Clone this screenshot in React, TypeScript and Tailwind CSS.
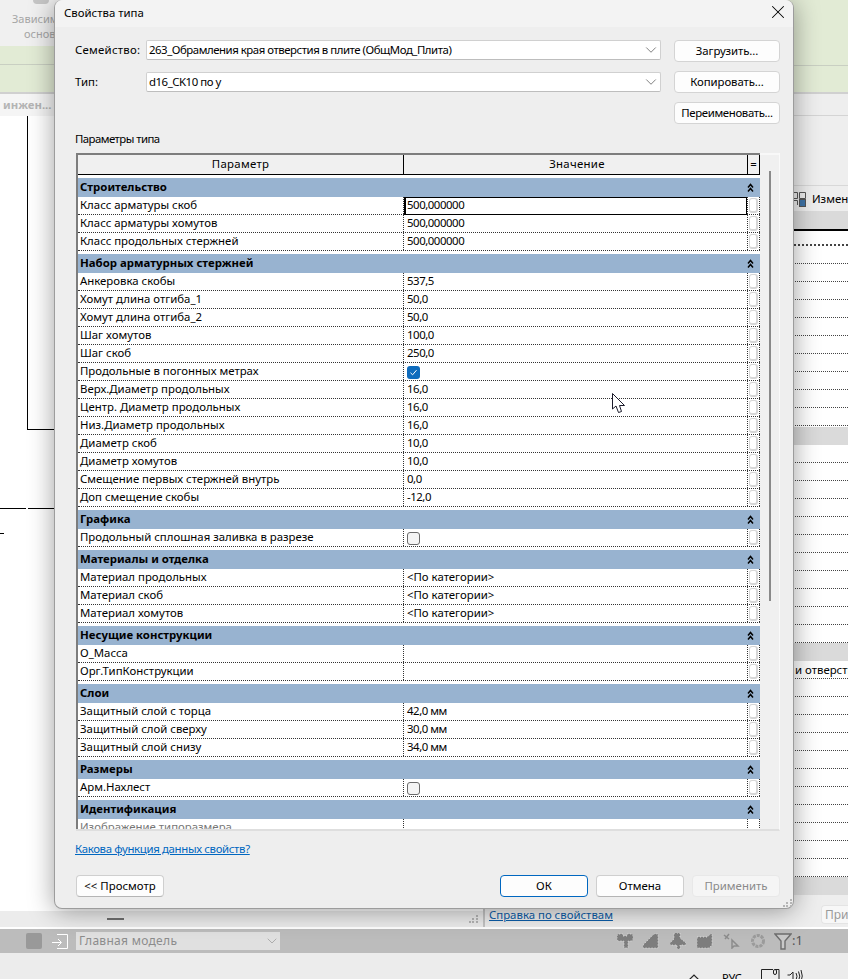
import { ChevronDown, X } from 'lucide-react';

type Row = { label: string; value?: string; check?: boolean; muted?: boolean };
type Section = { title: string; rows: Row[] };

const sections: Section[] = [
  {
    title: 'Строительство',
    rows: [
      { label: 'Класс арматуры скоб', value: '500,000000' },
      { label: 'Класс арматуры хомутов', value: '500,000000' },
      { label: 'Класс продольных стержней', value: '500,000000' },
    ],
  },
  {
    title: 'Набор арматурных стержней',
    rows: [
      { label: 'Анкеровка скобы', value: '537,5' },
      { label: 'Хомут длина отгиба_1', value: '50,0' },
      { label: 'Хомут длина отгиба_2', value: '50,0' },
      { label: 'Шаг хомутов', value: '100,0' },
      { label: 'Шаг скоб', value: '250,0' },
      { label: 'Продольные в погонных метрах', check: true },
      { label: 'Верх.Диаметр продольных', value: '16,0' },
      { label: 'Центр. Диаметр продольных', value: '16,0' },
      { label: 'Низ.Диаметр продольных', value: '16,0' },
      { label: 'Диаметр скоб', value: '10,0' },
      { label: 'Диаметр хомутов', value: '10,0' },
      { label: 'Смещение первых стержней внутрь', value: '0,0' },
      { label: 'Доп смещение скобы', value: '-12,0' },
    ],
  },
  { title: 'Графика', rows: [{ label: 'Продольный сплошная заливка в разрезе', check: false }] },
  {
    title: 'Материалы и отделка',
    rows: [
      { label: 'Материал продольных', value: '<По категории>' },
      { label: 'Материал скоб', value: '<По категории>' },
      { label: 'Материал хомутов', value: '<По категории>' },
    ],
  },
  { title: 'Несущие конструкции', rows: [{ label: 'О_Масса' }, { label: 'Орг.ТипКонструкции' }] },
  {
    title: 'Слои',
    rows: [
      { label: 'Защитный слой с торца', value: '42,0 мм' },
      { label: 'Защитный слой сверху', value: '30,0 мм' },
      { label: 'Защитный слой снизу', value: '34,0 мм' },
    ],
  },
  { title: 'Размеры', rows: [{ label: 'Арм.Нахлест', check: false }] },
  { title: 'Идентификация', rows: [{ label: 'Изображение типоразмера', muted: true }] },
];

function DoubleUp() {
  return (
    <svg width="7" height="10" viewBox="0 0 7 10" fill="none" stroke="black" strokeWidth="1.5" className="block">
      <path d="M1 4.5 L3.5 1.5 L6 4.5" />
      <path d="M1 8.5 L3.5 5.5 L6 8.5" />
    </svg>
  );
}

function Checkbox({ checked }: { checked: boolean }) {
  if (checked) {
    return (
      <div className="mt-[3px] flex h-[13px] w-[13px] items-center justify-center rounded-[3px] bg-[#0f6cbd]">
        <svg width="9" height="9" viewBox="0 0 9 9" fill="none" stroke="white" strokeWidth="1">
          <path d="M1.5 4.8 L3.6 6.8 L7.5 2.2" />
        </svg>
      </div>
    );
  }
  return <div className="mt-[3px] h-[13px] w-[13px] rounded-[3px] border border-[#6b6b6b] bg-[#f4f4f4]" />;
}

function PropRow({ row, selected }: { row: Row; selected?: boolean }) {
  const wide = row.value?.startsWith('<');
  return (
    <div className="flex h-[18px] border-b border-dotted border-[#333] bg-white">
      <div className={`w-[326px] shrink-0 border-r border-dotted border-[#333] pl-[2px] leading-[16px] whitespace-nowrap ${row.muted ? 'text-[#777]' : ''}`}>
        {row.label}
      </div>
      <div className={`w-[343px] shrink-0 ${wide ? '' : 'tracking-[-0.45px]'} ${selected ? 'h-[18px] border border-l-2 border-black pl-px leading-[14px]' : 'pl-[3px] leading-[16px]'}`}>
        {row.check !== undefined ? <Checkbox checked={row.check} /> : row.value}
      </div>
      <div className="flex w-[13px] shrink-0 justify-center border-x border-dotted border-[#333]">
        {!row.muted && <div className="mt-px h-[15px] w-[9px] rounded-[3px] border-2 border-l border-t border-[#d6d6d6] bg-white" />}
      </div>
    </div>
  );
}

function PropTable() {
  return (
    <div className="flex h-[678px] overflow-hidden border-b-2 border-r border-[#fafafa] border-b-[#dedede]">
      <div className="w-[684px] shrink-0 overflow-hidden border-l-2 border-t-2 border-[#7d7d7d] bg-white">
        <div className="flex h-[20px] border-b border-black bg-[#f0f0f0] leading-[18px]">
          <div className="w-[326px] shrink-0 border-r border-black text-center tracking-[0.3px]">Параметр</div>
          <div className="w-[343px] shrink-0 pl-[3px] text-center tracking-[0.3px]">Значение</div>
          <div className="w-[13px] shrink-0 border-x border-black text-center">=</div>
        </div>
        <div>
          {sections.map((s, i) => (
            <div key={s.title} className="pt-[3px]">
              <div className="flex h-[19px] items-center justify-between bg-[#98b3d0] pl-[2px] pr-[6px] font-bold">
                <span className="pb-[2px] leading-[16px]">{s.title}</span>
                <DoubleUp />
              </div>
              {s.rows.map((r, j) => (
                <PropRow key={r.label} row={r} selected={i === 0 && j === 0} />
              ))}
            </div>
          ))}
        </div>
      </div>
      <div className="flex-1 border-t-2 border-[#f8f8f8] bg-[#f0f0f0] pl-[9px] pt-[16px]">
        <div className="h-[430px] w-[2px] bg-[#8a8a8a]" />
      </div>
    </div>
  );
}

function Btn({ label, primary, disabled }: { label: string; primary?: boolean; disabled?: boolean }) {
  const tone = primary
    ? 'border-[#0067c0] bg-[#fdfdfd]'
    : disabled
      ? 'border-[#e8e8e8] bg-[#f5f5f5] text-[#8a8a8a]'
      : 'border-[#cfcfcf] border-b-[#b5b5b5] bg-[#fdfdfd]';
  return (
    <button className={`flex h-[22px] w-[88px] items-center justify-center rounded-[4px] border ${tone}`}>{label}</button>
  );
}

function SideBtn({ label, tight }: { label: string; tight?: boolean }) {
  return (
    <button className={`flex h-[22px] w-full items-center justify-center rounded-[4px] border border-[#d4d4d4] bg-[#fdfdfd] whitespace-nowrap ${tight ? 'tracking-[-0.35px]' : 'tracking-[-0.1px]'}`}>
      {label}
    </button>
  );
}

function Combo({ value }: { value: string }) {
  return (
    <div className="flex h-[20px] w-[515px] items-center justify-between rounded-[2px] border border-[#d0d0d0] border-b-[#bdbdbd] bg-white pl-[2px]">
      <span className="tracking-[-0.46px]">{value}</span>
      <ChevronDown size={18} strokeWidth={1.1} className="text-[#666]" />
    </div>
  );
}

function Grip() {
  return (
    <div className="grid w-[9px] grid-cols-3 gap-px">
      {[0, 0, 1, 0, 1, 1, 1, 1, 1].map((on, i) => (
        <div key={i} className={`h-[2px] w-[2px] ${on ? 'bg-[#b5b5b5]' : ''}`} />
      ))}
    </div>
  );
}

function Dialog() {
  return (
    <div className="absolute left-[54px] top-0 flex h-[909px] w-[740px] flex-col rounded-lg border border-t-0 border-[#9c9c9c] bg-[#eeeeee] shadow-[0_2px_26px_rgba(0,0,0,0.38)]">
      <div className="flex h-[27px] items-center justify-between rounded-t-lg bg-[#f3f3f3] pl-[9px] pr-[4px]">
        <span className="pb-px">Свойства типа</span>
        <X size={22} strokeWidth={1.1} className="mb-[3px]" />
      </div>
      <div className="flex justify-between pl-[20px] pr-[13px] pt-[13px]">
        <div className="flex flex-col gap-[12px]">
          <div className="flex items-center">
            <span className="w-[71px] tracking-[0.25px]">Семейство:</span>
            <Combo value="263_Обрамления края отверстия в плите (ОбщМод_Плита)" />
          </div>
          <div className="flex items-center">
            <span className="w-[71px]">Тип:</span>
            <Combo value="d16_CK10 по y" />
          </div>
        </div>
        <div className="flex w-[106px] flex-col gap-[9px]">
          <SideBtn label="Загрузить..." />
          <SideBtn label="Копировать..." />
          <SideBtn label="Переименовать..." tight />
        </div>
      </div>
      <div className="pl-[20px] pt-[7px] leading-[16px] tracking-[-0.55px]">Параметры типа</div>
      <div className="pl-[21px] pr-[13px] pt-[6px]">
        <PropTable />
      </div>
      <div className="pl-[20px] pt-[10px] leading-[16px] tracking-[-0.34px]">
        <a className="text-[#0067c0] underline">Какова функция данных свойств?</a>
      </div>
      <div className="flex justify-between pl-[21px] pr-[13px] pt-[18px]">
        <Btn label="<< Просмотр" />
        <div className="flex gap-[8px]">
          <Btn label="ОК" primary />
          <Btn label="Отмена" />
          <Btn label="Применить" disabled />
        </div>
      </div>
      <div className="flex flex-1 items-end justify-end pb-[1px] pr-[1px]">
        <Grip />
      </div>
    </div>
  );
}

function RibbonGreen() {
  return (
    <div className="h-[46px] bg-[#e2ebd5]">
      <div className="h-[19px] border-b border-[#c9cfc2]" />
    </div>
  );
}

function LeftPane() {
  return (
    <div className="flex w-[485px] shrink-0 flex-col border-r-2 border-[#c4c4c4]">
      <div className="h-[46px] bg-[#f0f0f0] text-[11px] leading-[15px] text-[#a6a6a6]">
        <div className="ml-[33px] h-[4px] w-[16px] rounded-b-full bg-[#c6c6c6]" />
        <div className="pl-[12px] pt-[7px]">Зависим</div>
        <div className="pl-[24px]">основ</div>
      </div>
      <RibbonGreen />
      <div className="h-[24px] border-t-2 border-[#d0d0d0] bg-[#f5f5f5] pl-[3px] font-bold leading-[22px] text-[#b4b4b4]">инжен...</div>
      <div className="flex-1 bg-white">
        <svg width="485" height="795" className="block" stroke="black" strokeWidth="1" fill="none" shapeRendering="crispEdges">
          <path d="M27.5 0 V313.5 H485" />
          <path d="M0 392.5 H26 M28 392.5 H485" />
          <path d="M0 417.5 H4" />
        </svg>
      </div>
      <div className="flex h-[16px] items-center justify-between bg-[#ececec] pl-[107px] pr-[5px]">
        <div className="h-[2px] w-[17px] bg-[#6f6f6f]" />
        <Grip />
      </div>
    </div>
  );
}

function GreyBand() {
  return <div className="h-[18px] bg-[#dadada]" />;
}

function DottedRows({ count }: { count: number }) {
  return (
    <>
      {Array.from({ length: count }).map((_, i) => (
        <div key={i} className="h-[18px] border-b border-dotted border-[#444] bg-white" />
      ))}
    </>
  );
}

function RightPane() {
  return (
    <div className="flex flex-1 flex-col overflow-hidden">
      <div className="h-[92px] bg-[#e2ebd5]">
        <div className="h-[66px] border-b border-[#c9cfc2]" />
      </div>
      <div className="h-[93px] border-t-2 border-[#d0d0d0] bg-[#eeeeee]">
        <div className="h-[22px] border-b border-[#d4d4d4]" />
      </div>
      <div className="flex h-[26px] items-center border-t border-[#d8d8d8] bg-[#eeeeee] pl-[307px] whitespace-nowrap">
        <svg width="14" height="16" viewBox="0 0 14 16" fill="none" stroke="#555" strokeWidth="1" className="mr-[6px] shrink-0">
          <path d="M0 1.5 H5.5 V7.5 H0 M0 9.5 H5.5 V14 M7.5 1.5 H13.5 V7.5 H7.5 Z" />
          <rect x="7.5" y="8.5" width="6" height="7" fill="#3f74a8" />
        </svg>
        Измен
      </div>
      <GreyBand />
      <div className="h-[17px] border-b-2 border-t-2 border-black border-b-[#444] border-dotted [border-top-style:solid] bg-white" />
      <DottedRows count={10} />
      <div className="h-px bg-white" />
      <GreyBand />
      <DottedRows count={11} />
      <GreyBand />
      <div className="h-[18px] border-b border-dotted border-[#444] bg-white pl-[310px] leading-[17px] whitespace-nowrap">и отверсти</div>
      <DottedRows count={11} />
      <GreyBand />
      <div className="flex flex-1 bg-[#eeeeee] pl-[4px]">
        <a className="w-[332px] shrink-0 pt-[11px] text-[#0a5ca8] underline">Справка по свойствам</a>
        <div className="mt-[10px] h-[19px] w-[27px] shrink-0 overflow-hidden rounded-l-[4px] border border-r-0 border-[#e4e4e4] bg-[#f7f7f7] pl-[3px] text-[12px] leading-[17px] text-[#9a9a9a]">При</div>
      </div>
    </div>
  );
}

function StatusIcons() {
  const dither = { stroke: '#dcdcdc', strokeWidth: 1, strokeDasharray: '1 2' };
  return (
    <div className="flex items-center gap-[10px] text-[#7d7d7d]">
      <svg width="16" height="16" viewBox="0 0 16 16" fill="currentColor" {...dither}><path d="M0 3 Q0 1 2 1 H6 V3 H10 V1 H14 Q16 1 16 3 V6 Q16 8 14 8 H11 V15 H7 V8 H2 Q0 8 0 6 Z" /></svg>
      <svg width="17" height="16" viewBox="0 0 17 16" fill="currentColor" {...dither}><path d="M0 12 L11 1 h4 v14 h-15 z" /></svg>
      <svg width="17" height="16" viewBox="0 0 17 16" fill="currentColor" {...dither}><path d="M4 0 h6 v5 l6 5 v2 h-6 v4 h-3 v-4 h-7 v-2 l4 -4 z" /></svg>
      <svg width="16" height="16" viewBox="0 0 16 16" fill="currentColor" {...dither}><path d="M0 4 h10 l5 -4 v12 l-3 3 h-12 z" /></svg>
      <svg width="17" height="16" viewBox="0 0 17 16" fill="none" stroke="#8c8c8c" strokeWidth="1.5"><path d="M1 2 l5 4 M6 1 l-4 5 M9 7 v8 l2 -2 h4 z" /></svg>
      <svg width="16" height="16" viewBox="0 0 16 16" fill="none" stroke="#9b9b9b" strokeWidth="3" strokeDasharray="3 1"><circle cx="8" cy="8" r="5.5" /></svg>
    </div>
  );
}

function StatusBar() {
  return (
    <div className="flex h-[26px] items-center border-t-2 border-white bg-[#bcbcbc] pl-[26px]">
      <div className="h-[16px] w-[16px] rounded-[2px] bg-[#999]" />
      <svg width="16" height="16" viewBox="0 0 16 16" fill="none" stroke="white" strokeWidth="1" className="ml-[10px]">
        <path d="M5 1.5 H15.5 V15.5 H5 M0 9.5 H9 M6 6 L9.5 9.5 L6 13" />
      </svg>
      <div className="ml-[8px] flex h-[18px] w-[204px] items-center justify-between bg-[#e0e0e0] pl-[3px] text-[12px] tracking-[0.3px] text-[#8c8c8c]">
        <span>Главная модель</span>
        <ChevronDown size={16} strokeWidth={1.1} className="text-[#999]" />
      </div>
      <div className="ml-[337px]">
        <StatusIcons />
      </div>
      <svg width="18" height="17" viewBox="0 0 18 17" fill="#c8c8c8" stroke="#6e6e6e" strokeWidth="1.4" className="ml-[8px]">
        <path d="M1 1 H17 L11 8 V16 H7 V8 Z" />
      </svg>
      <span className="text-[13px] text-[#555]">:1</span>
    </div>
  );
}

function Taskbar() {
  return (
    <div className="flex h-[26px] overflow-hidden bg-[#ececec] pl-[688px]">
      <svg width="12" height="8" viewBox="0 0 12 8" fill="none" stroke="#222" strokeWidth="1.2" className="mt-[21px] shrink-0">
        <path d="M1 6 L6 1 L11 6" />
      </svg>
      <span className="ml-[22px] mt-[17px] shrink-0 text-[11px] leading-[16px]">РУС</span>
      <svg width="20" height="14" viewBox="0 0 20 14" fill="none" stroke="#222" strokeWidth="1" className="ml-[19px] mt-[16px] shrink-0">
        <path d="M12 0.5 H0.5 V14 M14 0.5 h4 v14" />
        <rect x="12.5" y="0.5" width="3" height="5" rx="1.5" />
      </svg>
      <svg width="16" height="12" viewBox="0 0 16 12" fill="none" stroke="#222" strokeWidth="1" className="ml-[6px] mt-[17px] shrink-0">
        <path d="M0.5 5 H3 L6 2 V12 M9 3 Q11 6 9 10 M11.5 1.5 Q14 6 11.5 11 M14 0 Q16.5 6 14 12" />
      </svg>
    </div>
  );
}

function Cursor() {
  return (
    <svg width="14" height="21" viewBox="0 0 14 21" className="absolute left-[612px] top-[393px]" fill="white" stroke="#1b1b2b" strokeWidth="1">
      <path d="M0.5 0.5 V16 L4 13 L6.5 19.5 L9.5 18.5 L7.5 12.5 H12.5 Z" />
    </svg>
  );
}

export default function App() {
  return (
    <div className="relative h-[979px] w-[848px] overflow-hidden bg-[#eeeeee] font-['Noto_Sans',sans-serif] text-[11.4px] text-black">
      <div className="flex h-[927px]">
        <LeftPane />
        <RightPane />
      </div>
      <StatusBar />
      <Taskbar />
      <Dialog />
      <Cursor />
    </div>
  );
}
